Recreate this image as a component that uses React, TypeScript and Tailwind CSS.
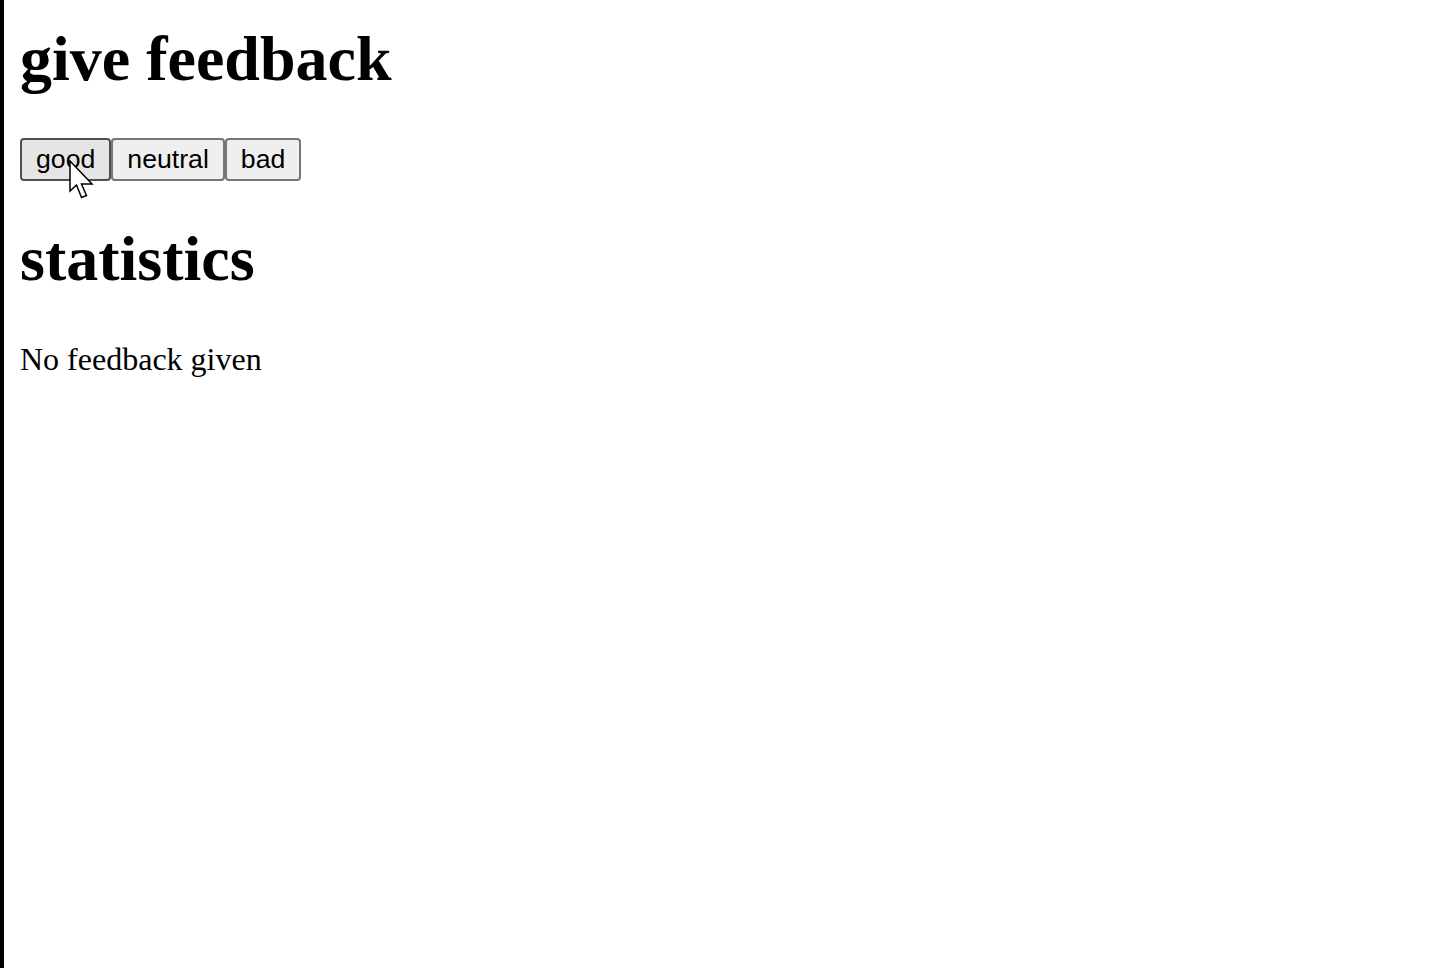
import { useState } from 'react';

const serif = { fontFamily: '"Liberation Serif", "Times New Roman", serif' };

function Button({ label, hovered, onClick }: { label: string; hovered?: boolean; onClick: () => void }) {
  return (
    <button
      onClick={onClick}
      className={`h-[43px] px-[14px] pb-[2px] border-2 rounded-[4px] text-[26.67px] leading-[30px] text-black font-['Liberation_Sans',Arial,sans-serif] ${
        hovered ? 'bg-[#e5e5e5] border-[#4f4f4f]' : 'bg-[#efefef] border-[#767676]'
      }`}
    >
      {label}
    </button>
  );
}

function Cursor() {
  return (
    <svg
      className="absolute left-[69px] top-[160px] pointer-events-none"
      width="26"
      height="40"
      viewBox="0 0 26 40"
    >
      <path
        d="M1 1 V31 L7.5 25 L12.5 37.5 L17.5 35.5 L12.5 24 H23 Z"
        fill="#fff"
        stroke="#000"
        strokeWidth="1.5"
        strokeLinejoin="miter"
      />
    </svg>
  );
}

export default function App() {
  const [good, setGood] = useState(0);
  const [neutral, setNeutral] = useState(0);
  const [bad, setBad] = useState(0);
  const total = good + neutral + bad;

  return (
    <div className="relative flex min-h-screen bg-white">
      <div className="w-[4px] bg-black shrink-0" />
      <div className="pl-[16px] text-black" style={serif}>
        <h1 className="mt-[27px] text-[64px] leading-[64px] font-bold">give feedback</h1>
        <div className="mt-[47px] flex">
          <Button label="good" hovered onClick={() => setGood(good + 1)} />
          <Button label="neutral" onClick={() => setNeutral(neutral + 1)} />
          <Button label="bad" onClick={() => setBad(bad + 1)} />
        </div>
        <h2 className="mt-[46px] text-[64px] leading-[64px] font-bold">statistics</h2>
        {total === 0 ? (
          <p className="mt-[52px] text-[32px] leading-[32px]">No feedback given</p>
        ) : (
          <table className="mt-[52px] text-[32px] leading-[40px]">
            <tbody>
              <tr><td>good</td><td>{good}</td></tr>
              <tr><td>neutral</td><td>{neutral}</td></tr>
              <tr><td>bad</td><td>{bad}</td></tr>
              <tr><td>all</td><td>{total}</td></tr>
              <tr><td>average</td><td>{(good - bad) / total}</td></tr>
              <tr><td>positive</td><td>{(good / total) * 100} %</td></tr>
            </tbody>
          </table>
        )}
      </div>
      <Cursor />
    </div>
  );
}
